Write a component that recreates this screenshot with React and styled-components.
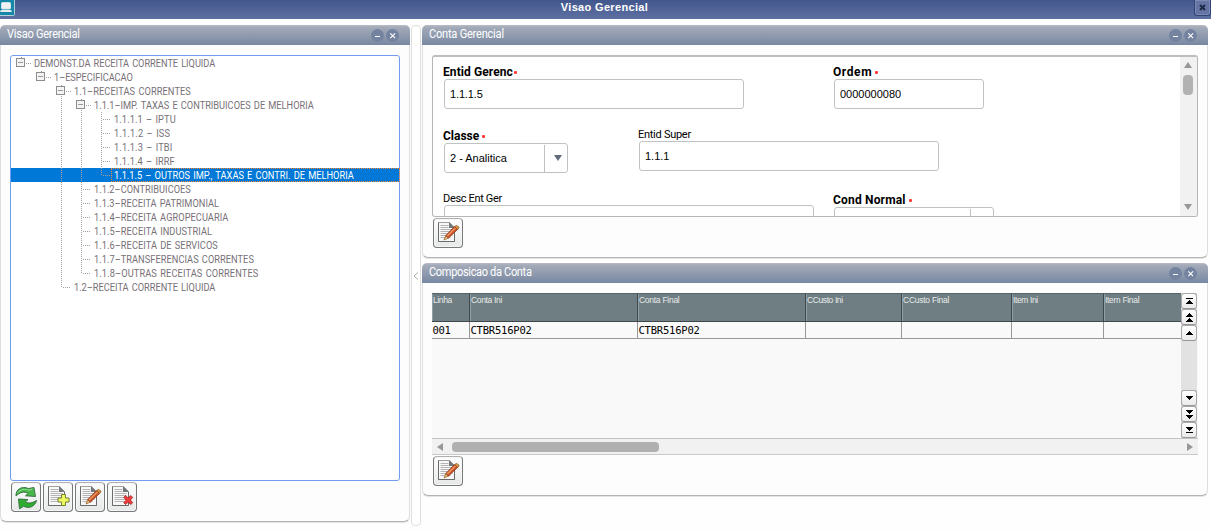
import React, { useLayoutEffect, useRef, useState } from 'react';
import styled, { createGlobalStyle } from 'styled-components';

const GlobalStyle = createGlobalStyle`
    * {
        box-sizing: border-box;
    }

    body {
        margin: 0;
        background: #fdfdfd;
        font-family: 'Liberation Sans', Arial, sans-serif;
        font-size: 11px;
        color: #000;
        overflow: hidden;
    }
`;

const Page = styled.div`
    width: 1211px;
    height: 531px;
    overflow: hidden;
    background: #fefefe;
`;

const TitleBar = styled.header`
    display: flex;
    align-items: flex-start;
    justify-content: space-between;
    height: 19px;
    background: linear-gradient(#42578d, #5f70a2);
`;

const WindowTitle = styled.h1`
    margin: 0;
    font-size: 11px;
    line-height: 14px;
    font-weight: bold;
    color: #fff;
`;

const AppIcon = styled.svg`
    display: block;
    width: 28px;
    height: 16px;
`;

const WindowClose = styled.button`
    width: 17px;
    height: 16px;
    margin-left: 13px;
    padding: 0;
    border: 1px solid #2f4377;
    border-top: none;
    border-radius: 0 0 3px 3px;
    background: #6474a5;
    box-shadow: inset 0 0 0 1px #7c8ab3;
    display: flex;
    align-items: center;
    justify-content: center;
`;

const Main = styled.main`
    display: flex;
    align-items: flex-start;
    padding-top: 6px;
`;

const Column = styled.div`
    display: flex;
    flex-direction: column;
    gap: 5px;
    width: ${(p) => p.$width}px;
`;

const PanelBox = styled.section`
    height: ${(p) => p.$height}px;
    border-radius: 6px;
    background: #fdfdfd;
    display: flex;
    flex-direction: column;
`;

const PanelHeader = styled.div`
    display: flex;
    align-items: center;
    height: 20px;
    flex: none;
    padding: 0 11px 0 7px;
    border-radius: 5px 5px 0 0;
    background: linear-gradient(#b9bec7 0, #a4abb9 2px, #7888a2 20px);
    color: #fff;
    font-family: Roboto, sans-serif;
    font-size: 12px;
    line-height: 18px;
`;

const HeaderText = styled.div`
    flex: 1;
    height: 18px;
    margin-top: -2px;
`;

const PanelBody = styled.div`
    flex: 1;
    padding: 10px 9px 0;
    border: 1px solid #dedede;
    border-top: none;
    border-bottom: 1px solid #b3b3b3;
    border-radius: 0 0 6px 6px;
    box-shadow: 0 1px 0 #e4e4e4;
`;

const RoundButton = styled.button`
    width: 13px;
    height: 13px;
    margin: 1px 0 0 2px;
    padding: 0;
    border: none;
    border-radius: 50%;
    background: #74839f;
    display: flex;
    align-items: center;
    justify-content: center;
`;

const Splitter = styled.div`
    width: 10px;
    height: 501px;
    margin: 0 1px;
    border: 1px solid #dedede;
    border-radius: 4px;
    background: #fff;
    display: flex;
    align-items: center;
    justify-content: center;
`;

const FitSpan = styled.span`
    display: inline-block;
    white-space: pre;
    transform: scaleX(${(p) => p.$squeeze});
    transform-origin: left;
`;

const TreeBox = styled.div`
    height: 426px;
    border: 1px solid #719df0;
    border-radius: 3px;
    background: #fff;
`;

const TreeRow = styled.div`
    display: flex;
    height: 14px;
    background: ${(p) => (p.$selected ? '#0078d7' : 'transparent')};
    color: ${(p) => (p.$selected ? '#fff' : '#777177')};
`;

const TreeLabel = styled.div`
    flex: 1;
    padding-left: ${(p) => (p.$selected ? 1.5 : 2.5)}px;
    border: ${(p) => (p.$selected ? '1px dotted #ff8728' : 'none')};
    font-family: Roboto, sans-serif;
    font-size: 11px;
    word-spacing: 1px;
    line-height: ${(p) => (p.$selected ? 13 : 15)}px;
    height: 14px;
`;

const Guide = styled.svg`
    display: block;
    width: 20px;
    height: 14px;
    flex: none;
`;

const Toolbar = styled.div`
    display: flex;
    gap: 2px;
    padding: 1px 0 0 1px;
`;

const ToolButton = styled.button`
    width: 30px;
    height: 30px;
    padding: 0;
    border: 1px solid #77787a;
    border-top-color: #b0b0b0;
    border-radius: 4px;
    background: linear-gradient(#fefefe, #e6e8e8);
    box-shadow: inset 0 0 0 1px #f6f6f6;
    display: flex;
    align-items: center;
    justify-content: center;
`;

const FormBox = styled.div`
    display: flex;
    height: 162px;
    border: 1px solid #b6b6b6;
    border-top: 2px solid #bdbdbd;
    border-radius: 3px;
    background: #fff;
    overflow: hidden;
`;

const FormGrid = styled.div`
    flex: 1;
    display: grid;
    grid-template-columns: repeat(3, 195px);
    grid-auto-rows: 64px;
    padding: 7px 0 0 10px;
    height: 159px;
    overflow: hidden;
`;

const Field = styled.label`
    grid-column: ${(p) => p.$column};
    grid-row: ${(p) => p.$row};
    display: block;
`;

const FieldLabel = styled.div`
    display: flex;
    height: ${(p) => (p.$required ? 15 : 13)}px;
    line-height: ${(p) => (p.$required ? 16 : 14)}px;
    font-family: Roboto, sans-serif;
    font-size: ${(p) => (p.$required ? 12 : 11)}px;
    font-weight: ${(p) => (p.$required ? 'bold' : 'normal')};
`;

const Star = styled.i`
    width: 3px;
    height: 3px;
    margin: 7px 0 0 ${(p) => p.$gap}px;
    border-radius: 1px;
    background: #ff3b3b;
`;

const Input = styled.div`
    display: flex;
    align-items: center;
    width: ${(p) => p.$width}px;
    height: 30px;
    margin-left: 1px;
    padding-left: 5px;
    border: 1px solid #bfc2c3;
    border-radius: 3px;
    background: #fff;
    line-height: 28px;
`;

const SelectArrow = styled.div`
    display: flex;
    align-items: center;
    justify-content: center;
    width: 23px;
    height: 27px;
    margin-left: auto;
    padding-left: 3px;
    border-left: 1px solid #bfc2c3;
`;

const VScroll = styled.div`
    display: flex;
    flex-direction: column;
    align-items: center;
    width: 17px;
    padding: 5px 1px 6px 0;
    background: #f1f1f1;
`;

const VThumb = styled.div`
    width: 10px;
    height: 20px;
    margin: 7px 0 auto;
    border-radius: 4px;
    background: #b2b2b2;
`;

const GridBox = styled.div`
    display: flex;
    height: 146px;
    border-bottom: 1px solid #c4c4c4;
    background: #f9f9f9;
`;

const Table = styled.table`
    width: 749px;
    height: 46px;
    border-collapse: separate;
    border-spacing: 0;
    table-layout: fixed;
`;

const HeadCell = styled.th`
    width: ${(p) => p.$width}px;
    height: 29px;
    padding: 2px 0 0 1px;
    vertical-align: top;
    text-align: left;
    background: #6f7e82;
    border-top: 1px solid #596468;
    border-bottom: 1px solid #3e484b;
    border-right: ${(p) => (p.$last ? 'none' : '1px solid #3e484b')};
    box-shadow: inset 1px 0 0 #93a0a3;
    color: #e8ebeb;
    font-weight: normal;
    font-size: 8.5px;
    line-height: 8px;
`;

const Cell = styled.td`
    height: 17px;
    padding: 0 0 0 0.5px;
    border-right: ${(p) => (p.$last ? 'none' : '1px solid #979797')};
    border-bottom: 1px solid #979797;
    font-family: 'DejaVu Sans Mono', monospace;
    font-size: 10.5px;
    line-height: 15px;
`;

const GridScroll = styled.div`
    display: flex;
    flex-direction: column;
    width: 16px;
    background: #e2e2e2;
`;

const StepButton = styled.button`
    width: 16px;
    height: 16px;
    margin-top: ${(p) => (p.$push ? 'auto' : 0)};
    padding: 0;
    border: 1px solid #a8a8a8;
    border-bottom-color: #989898;
    border-radius: 3px;
    background: linear-gradient(#fefefe, #ebebeb);
    display: flex;
    align-items: center;
    justify-content: center;
`;

const HScroll = styled.div`
    display: flex;
    align-items: center;
    height: 16px;
    padding: 0 5px;
    background: #f1f1f1;
    border-bottom: 1px solid #c9c9c9;
`;

const HThumb = styled.div`
    width: 207px;
    height: 10px;
    margin: 0 auto 0 9px;
    border-radius: 4px;
    background: #b0b0b0;
`;

const Fit = ({ width, squeeze = 1, children }) => {
  const ref = useRef(null);
  const [spacing, setSpacing] = useState(0);

  useLayoutEffect(() => {
    const natural = ref.current.offsetWidth;
    setSpacing((width / squeeze - natural) / children.length);
  }, [width, squeeze, children]);

  return <FitSpan ref={ref} $squeeze={squeeze} style={{ letterSpacing: `${spacing}px` }}>{children}</FitSpan>;
};

const Triangle = ({ points, width, height, color = '#979797' }) => (
  <svg width={width} height={height} style={{ flex: 'none' }}>
    <polygon points={points} fill={color} />
  </svg>
);

const Panel = ({ title, titleWidth, height, children }) => (
  <PanelBox $height={height}>
    <PanelHeader>
      <HeaderText><Fit width={titleWidth} squeeze={0.92}>{title}</Fit></HeaderText>
      <RoundButton aria-label="Minimizar">
        <svg width="13" height="13" shapeRendering="crispEdges">
          <path d="M4 7.5h5" stroke="#fff" />
        </svg>
      </RoundButton>
      <RoundButton aria-label="Fechar">
        <svg width="13" height="13">
          <path d="M4.3 4.3l4.8 4.8M9.1 4.3l-4.8 4.8" stroke="#fff" strokeWidth="1.1" />
        </svg>
      </RoundButton>
    </PanelHeader>
    <PanelBody>{children}</PanelBody>
  </PanelBox>
);

// Guide codes: . blank, b open box, B open box with line below, | line, t branch, e last branch
const tree = [
  { guides: 'b', text: 'DEMONST.DA RECEITA CORRENTE LIQUIDA', width: 181 },
  { guides: '.b', text: '1–ESPECIFICACAO', width: 79 },
  { guides: '..B', text: '1.1–RECEITAS CORRENTES', width: 117 },
  { guides: '..|B', text: '1.1.1–IMP. TAXAS E CONTRIBUICOES DE MELHORIA', width: 220 },
  { guides: '..||t', text: '1.1.1.1 – IPTU', width: 62 },
  { guides: '..||t', text: '1.1.1.2 – ISS', width: 56 },
  { guides: '..||t', text: '1.1.1.3 – ITBI', width: 58 },
  { guides: '..||t', text: '1.1.1.4 – IRRF', width: 61 },
  { guides: '..||e', text: '1.1.1.5 – OUTROS IMP., TAXAS E CONTRI. DE MELHORIA', width: 240, selected: true },
  { guides: '..|t', text: '1.1.2–CONTRIBUICOES', width: 97 },
  { guides: '..|t', text: '1.1.3–RECEITA PATRIMONIAL', width: 125 },
  { guides: '..|t', text: '1.1.4–RECEITA AGROPECUARIA', width: 134 },
  { guides: '..|t', text: '1.1.5–RECEITA INDUSTRIAL', width: 118 },
  { guides: '..|t', text: '1.1.6–RECEITA DE SERVICOS', width: 124 },
  { guides: '..|t', text: '1.1.7–TRANSFERENCIAS CORRENTES', width: 160 },
  { guides: '..|e', text: '1.1.8–OUTRAS RECEITAS CORRENTES', width: 164 },
  { guides: '..e', text: '1.2–RECEITA CORRENTE LIQUIDA', width: 141 },
];

const guidePaths = {
  '.': '',
  b: 'M15 7.5h5',
  B: 'M15 7.5h5M10.5 12v2',
  '|': 'M10.5 0v14',
  t: 'M10.5 0v14M12 7.5h7',
  e: 'M10.5 0v8M12 7.5h7',
};

const TreeGuide = ({ kind }) => (
  <Guide shapeRendering="crispEdges">
    <path d={guidePaths[kind]} stroke="#a0a0a0" strokeDasharray="1 1" fill="none" />
    {kind.toLowerCase() === 'b' && (
      <>
        <path d="M10.5 1v2" stroke="#909090" />
        <rect x="5.5" y="2.5" width="8" height="8" fill="#f4f4f4" stroke="#8c8c8c" />
        <path d="M7 6.5h5" stroke="#9a9a9a" />
      </>
    )}
  </Guide>
);

const Sheet = () => (
  <>
    <path d="M4.5 3.5h11l5 5v14h-16z" fill="#f8f8f8" stroke="#a0a0a0" />
    <path d="M4.5 3.5v19h16V9" fill="none" stroke="#6a6a6a" />
    <path d="M6.5 6.5h8M6.5 8.5h8M6.5 10.5h12M6.5 12.5h12M6.5 14.5h12M6.5 16.5h12M6.5 18.5h10" stroke="#b4b4b4" />
    <path d="M15 3l6 6h-6z" fill="#73777a" />
  </>
);

const EditIcon = () => (
  <svg width="28" height="28">
    <Sheet />
    <path d="M10 21l1.8-4.4 2.6 2.4z" fill="#f0c775" stroke="#8b5726" strokeWidth=".7" />
    <path d="M11.8 16.600l8.700-9 3.300 2.600-9.300 8.800z" fill="#cf5526" stroke="#8b3518" strokeWidth=".8" />
    <path d="M13.2 17l8.500-8.400" stroke="#ef9d67" strokeWidth="1.2" />
    <path d="M20.500 7.600l2-1.200 2.600 1.800-1.200 2.200z" fill="#e19a3f" stroke="#8b5726" strokeWidth=".8" />
  </svg>
);

const AddIcon = () => (
  <svg width="28" height="28">
    <Sheet />
    <path d="M17.500 11.500h4v3.500h3.500v4h-3.500v3.500h-4v-3.500h-3.500v-4h3.500z" fill="#eef863" stroke="#75802e" />
  </svg>
);

const DeleteIcon = () => (
  <svg width="28" height="28">
    <Sheet />
    <path d="M17.500 12.500l2.700 2.500 2.500-2.500 2 2-2.300 2.500 2.300 2.700-2 1.900-2.500-2.500-2.500 2.500-2-1.900 2.500-2.700-2.500-2.500z" fill="#ee3a38" stroke="#a52727" strokeWidth=".8" />
  </svg>
);

const RefreshIcon = () => (
  <svg width="28" height="28" stroke="#34673e" strokeWidth=".9" strokeLinejoin="round">
    <path d="M4 13C3.500 6.500 9.500 2.500 16.500 5.500L22 4.500 23.500 13.500 13.500 12.800l2.700-2.600C12 8.200 8 9 4 13z" fill="#45b849" />
    <path d="M24.500 17.500C23 23.500 17.500 26 11.500 23.300L7.500 25.800 6.500 16l9.500.6-2.700 2.400C17 20.800 20.500 20 24.500 17.500z" fill="#2eae2e" />
    <path d="M5.500 10C8.500 6 13 6 16.500 7.200L20.500 6" fill="none" stroke="#a4dfa0" />
  </svg>
);

const FormField = ({ column, row, label, labelWidth, required, starGap = 3, width, value, valueWidth, select }) => (
  <Field $column={column} $row={row}>
    <FieldLabel $required={required}>
      <Fit width={labelWidth}>{label}</Fit>
      {required && <Star $gap={starGap} />}
    </FieldLabel>
    <Input $width={width}>
      {value && <Fit width={valueWidth}>{value}</Fit>}
      {select && (
        <SelectArrow>
          <Triangle points="0,0 8,0 4,6" width={8} height={7} color="#626a7d" />
        </SelectArrow>
      )}
    </Input>
  </Field>
);

const columns = [
  { name: 'Linha', width: 38, text: 19, value: '001', valueWidth: 18 },
  { name: 'Conta Ini', width: 168, text: 31, value: 'CTBR516P02', valueWidth: 61 },
  { name: 'Conta Final', width: 168, text: 40, value: 'CTBR516P02', valueWidth: 61 },
  { name: 'CCusto Ini', width: 96, text: 36 },
  { name: 'CCusto Final', width: 110, text: 46 },
  { name: 'Item Ini', width: 92, text: 25 },
  { name: 'Item Final', width: 77, text: 34 },
];

const steps = [
  'M4 4h7v1h-7zM7 6h1l3 4h-7z',
  'M7 3h1l3 4h-7zM7 8h1l3 4h-7z',
  'M7 5h1l3 4h-7z',
  'M4 5h7l-3 4h-1z',
  'M4 3h7l-3 4h-1zM4 8h7l-3 4h-1z',
  'M4 4h7l-3 4h-1zM4 9h7v1h-7z',
];

const App = () => (
  <Page>
    <GlobalStyle />
    <TitleBar>
      <AppIcon>
        <rect x="-1" y="-1" width="15.500" height="16.500" rx="1" fill="#1587a8" stroke="#b1ced9" />
        <rect x="1.500" y="2.500" width="9" height="6.500" rx="1" fill="#f1f3f3" stroke="#d5e5ea" />
        <path d="M1 10h10l1 2h-12z" fill="#e7edef" />
      </AppIcon>
      <WindowTitle><Fit width={87}>Visao Gerencial</Fit></WindowTitle>
      <WindowClose aria-label="Fechar">
        <svg width="7" height="7">
          <path d="M1 1l5 5M6 1l-5 5" stroke="#1d2945" strokeWidth="2" />
        </svg>
      </WindowClose>
    </TitleBar>
    <Main>
      <Column $width={410}>
        <Panel title="Visao Gerencial" titleWidth={72.5} height={497}>
          <TreeBox>
            {tree.map((row) => (
              <TreeRow key={row.text} $selected={row.selected}>
                {row.guides.split('').map((kind, i) => <TreeGuide key={i} kind={kind} />)}
                <TreeLabel $selected={row.selected}>
                  <Fit width={row.width} squeeze={0.84}>{row.text}</Fit>
                </TreeLabel>
              </TreeRow>
            ))}
          </TreeBox>
          <Toolbar>
            <ToolButton aria-label="Atualizar"><RefreshIcon /></ToolButton>
            <ToolButton aria-label="Incluir"><AddIcon /></ToolButton>
            <ToolButton aria-label="Alterar"><EditIcon /></ToolButton>
            <ToolButton aria-label="Excluir"><DeleteIcon /></ToolButton>
          </Toolbar>
        </Panel>
      </Column>
      <Splitter>
        <svg width="6" height="8" style={{ flex: 'none' }}>
          <path d="M5 .5L1 4l4 3.500" fill="none" stroke="#aaa" />
        </svg>
      </Splitter>
      <Column $width={786}>
        <Panel title="Conta Gerencial" titleWidth={75} height={233}>
          <FormBox>
            <FormGrid>
              <FormField column={1} row={1} label="Entid Gerenc" labelWidth={70} starGap={1} required width={300} value="1.1.1.5" valueWidth={33} />
              <FormField column={3} row={1} label="Ordem" labelWidth={39} required width={150} value="0000000080" valueWidth={61} />
              <FormField column={1} row={2} label="Classe" labelWidth={36} required width={124} value="2 - Analitica" valueWidth={57} select />
              <FormField column={2} row={2} label="Entid Super" labelWidth={53} width={300} value="1.1.1" valueWidth={24} />
              <FormField column={1} row={3} label="Desc Ent Ger" labelWidth={59} width={370} />
              <FormField column={3} row={3} label="Cond Normal" labelWidth={73} required width={160} select />
            </FormGrid>
            <VScroll>
              <Triangle points="0,6 4,0 8,6" width={8} height={6} />
              <VThumb />
              <Triangle points="0,0 8,0 4,6" width={8} height={6} />
            </VScroll>
          </FormBox>
          <Toolbar>
            <ToolButton aria-label="Alterar"><EditIcon /></ToolButton>
          </Toolbar>
        </Panel>
        <Panel title="Composicao da Conta" titleWidth={103} height={233}>
          <GridBox>
            <Table>
              <thead>
                <tr>
                  {columns.map((c, i) => (
                    <HeadCell key={c.name} $width={c.width} $last={i === columns.length - 1}>
                      <Fit width={c.text}>{c.name}</Fit>
                    </HeadCell>
                  ))}
                </tr>
              </thead>
              <tbody>
                <tr>
                  {columns.map((c, i) => (
                    <Cell key={c.name} $last={i === columns.length - 1}>
                      {c.value && <Fit width={c.valueWidth}>{c.value}</Fit>}
                    </Cell>
                  ))}
                </tr>
              </tbody>
            </Table>
            <GridScroll>
              {steps.map((d, i) => (
                <StepButton key={d} $push={i === 3}>
                  <svg width="14" height="14" shapeRendering="crispEdges">
                    <path d={d} />
                  </svg>
                </StepButton>
              ))}
            </GridScroll>
          </GridBox>
          <HScroll>
            <Triangle points="0,4 6,0 6,8" width={6} height={8} />
            <HThumb />
            <Triangle points="0,0 6,4 0,8" width={6} height={8} />
          </HScroll>
          <Toolbar>
            <ToolButton aria-label="Alterar"><EditIcon /></ToolButton>
          </Toolbar>
        </Panel>
      </Column>
    </Main>
  </Page>
);

export default App;
